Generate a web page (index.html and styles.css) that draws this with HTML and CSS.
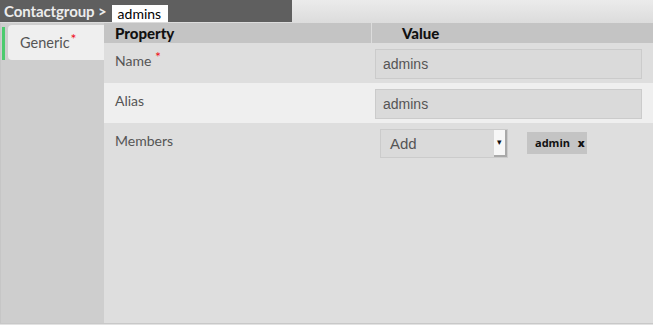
FILE: index.html
```html
<!DOCTYPE html>
<html lang="en">

<head>
    <meta charset="UTF-8">
    <meta name="viewport" content="width=device-width, initial-scale=1.0">
    <title>Contactgroup - admins</title>
    <link rel="stylesheet" href="styles.css">
</head>

<body>
    <div class="topbar">
        <div class="crumb">
            <span class="crumb-type">Contactgroup &gt;</span>
            <span class="crumb-name">admins</span>
        </div>
    </div>

    <div class="panel">
        <div class="sidebar">
            <div class="tab-wrap">
                <div class="tab">Generic<span class="req">*</span></div>
            </div>
        </div>

        <div class="main">
            <div class="row head">
                <div class="col-prop">Property</div>
                <div class="col-val">Value</div>
            </div>
            <div class="row">
                <div class="col-prop">Name <span class="req">*</span></div>
                <div class="col-val"><input type="text" class="field" value="admins"></div>
            </div>
            <div class="row alt">
                <div class="col-prop">Alias</div>
                <div class="col-val"><input type="text" class="field" value="admins"></div>
            </div>
            <div class="row">
                <div class="col-prop">Members</div>
                <div class="col-val members">
                    <div class="select">
                        <span>Add</span>
                        <span class="select-btn">&#9662;</span>
                    </div>
                    <span class="tag">admin <b>x</b></span>
                </div>
            </div>
        </div>
    </div>
</body>

</html>
```

FILE: styles.css
```css
body {
    margin: 0;
    padding: 0;
    font-family: Lato, "Open Sans", sans-serif;
    background: #e2e2e2;
    width: 653px;
    height: 325px;
    overflow: hidden;
}

.topbar {
    height: 23px;
    background: linear-gradient(#ebebeb, #dcdcdc);
}

.crumb {
    width: 288px;
    height: 22px;
    padding-left: 4px;
    background: #5f5f5f;
    display: flex;
    align-items: center;
}

.crumb-type {
    color: #ececec;
    font-weight: bold;
    font-size: 15px;
    letter-spacing: -0.1px;
}

.crumb-name {
    margin-left: 5px;
    margin-top: 4px;
    height: 17px;
    line-height: 17px;
    padding: 0 6px;
    background: #fff;
    color: #000;
    font-size: 14px;
    width: 44px;
}

.panel {
    display: flex;
    height: 300px;
    border-bottom: 1px solid #c8c8c8;
}

.sidebar {
    width: 103px;
    background: #cecece;
    border-left: 1px solid #c6c6c6;
    padding-top: 2px;
}

.tab-wrap {
    margin-left: 1px;
    border-left: 3px solid #4ccb6e;
    padding-left: 3px;
    height: 33px;
    margin-top: 2px;
    display: flex;
}

.tab {
    flex: 1;
    height: 35px;
    margin-top: -2px;
    border-radius: 4px 0 0 4px;
    background: #efefef;
    display: flex;
    align-items: center;
    padding-left: 12px;
    font-size: 14.5px;
    color: #555;
}

.req {
    color: #f0101a;
    font-size: 14px;
    position: relative;
    top: -4px;
}

.tab .req {
    margin-left: 1px;
}

.main {
    flex: 1;
    background: #dedede;
}

.row {
    display: flex;
    height: 40px;
}

.row.alt {
    background: #efefef;
}

.row.head {
    height: 20px;
    background: #c4c4c4;
    font-weight: 900;
    font-size: 15px;
    color: #111;
    line-height: 20px;
}

.col-prop {
    width: 256px;
    padding-left: 11px;
    padding-top: 9px;
    font-size: 14px;
    color: #555;
}

.col-val {
    flex: 1;
    padding: 6px 10px 0 4px;
}

.head .col-prop {
    padding-top: 0;
    color: #111;
    font-size: 15px;
}

.head .col-val {
    padding: 0 0 0 30px;
    border-left: 1px solid #dcdcdc;
}

.field {
    box-sizing: border-box;
    width: 267px;
    height: 30px;
    margin: 0;
    padding: 0 7px;
    background: #dadada;
    border: 1px solid #cbcbcb;
    font-family: "Liberation Sans", Arial, sans-serif;
    font-size: 14px;
    color: #555;
    outline: none;
}

.members {
    display: flex;
    align-items: flex-start;
    padding-left: 8px;
}

.select {
    box-sizing: border-box;
    width: 128px;
    height: 29px;
    margin-left: 1px;
    border: 1px solid #cbcbcb;
    background: #dadada;
    display: flex;
    align-items: center;
    justify-content: space-between;
    font-family: "Liberation Sans", Arial, sans-serif;
    font-size: 15px;
    color: #555;
    padding-left: 9px;
}

.select-btn {
    width: 13px;
    height: 27px;
    background: #f7f7f7;
    border-right: 2px solid #a9a9a9;
    border-bottom: 2px solid #a9a9a9;
    box-sizing: border-box;
    color: #111;
    font-size: 9px;
    line-height: 25px;
    text-align: center;
}

.tag {
    margin: 3px 0 0 19px;
    width: 60px;
    height: 22px;
    box-sizing: border-box;
    padding-left: 8px;
    line-height: 22px;
    background: #c4c4c4;
    font-size: 11px;
    font-weight: bold;
    color: #111;
    font-family: "Open Sans", Lato, sans-serif;
}

.tag b {
    margin-left: 5px;
}
```
